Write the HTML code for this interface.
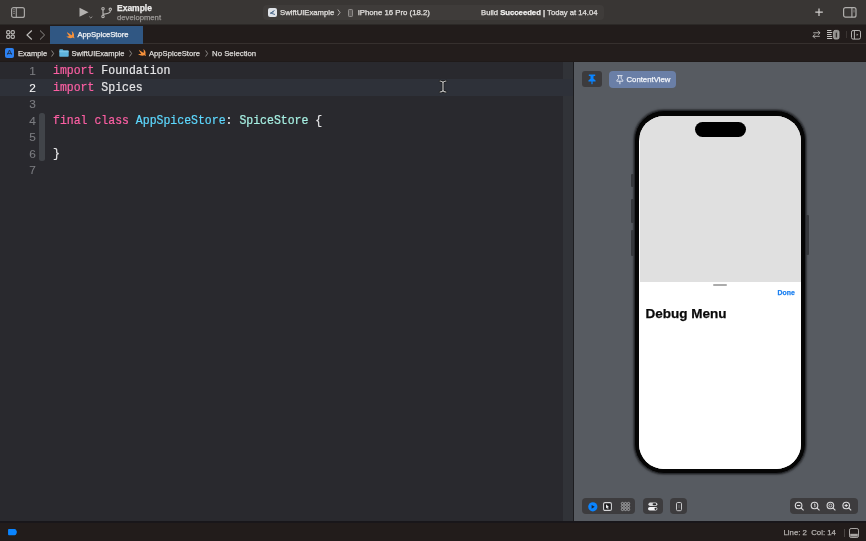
<!DOCTYPE html>
<html><head><meta charset="utf-8">
<style>
*{margin:0;padding:0;box-sizing:border-box}
body{will-change:transform;} html,body{width:866px;height:541px;overflow:hidden;background:#29292e;font-family:"Liberation Sans",sans-serif}
.abs{position:absolute}
svg{position:absolute;overflow:visible}
#title{left:0;top:0;width:866px;height:25px;background:#393634}
#tbot{left:0;top:24px;width:866px;height:1px;background:#2c2927}
#tabbar{left:0;top:25px;width:866px;height:19px;background:#221c1b}
#sep2{left:0;top:43px;width:866px;height:1px;background:#36302e}
#crumb{left:0;top:44px;width:866px;height:18px;background:#231d1c}
#sep3{left:0;top:61px;width:866px;height:1px;background:#1f1a19}
#editor{left:0;top:62px;width:573px;height:459px;background:#29292e}
#hl{left:0;top:79px;width:573px;height:17px;background:#2e3139}
#mini{left:563px;top:62px;width:10px;height:17px;background:#313338}
#mini2{left:563px;top:96px;width:10px;height:425px;background:#313338}
#vsep{left:573px;top:62px;width:1px;height:459px;background:#1c1c1f}
#canvas{left:574px;top:62px;width:292px;height:460px;background:#575b61}
#edbot{left:0;top:521px;width:866px;height:1px;background:#18161a}
#sep4{left:0;top:522px;width:866px;height:1px;background:#19161a}
#status{left:0;top:523px;width:866px;height:18px;background:#221c1b}
.code{font-family:"Liberation Mono",monospace;font-size:11.5px;white-space:pre;color:#e4e4e6;left:53px;height:16.5px;line-height:16.5px;transform-origin:0 60%;transform:translateY(1.3px) scaleY(1.13);-webkit-text-stroke:0.2px currentColor}
.ln{font-family:"Liberation Sans",sans-serif;font-size:11.8px;color:#7b7c80;width:35.8px;text-align:right;left:0;height:16.5px;line-height:16.5px;transform:translateY(1.4px);-webkit-text-stroke:0.1px currentColor}
.kw{color:#fc5fa3}
.ty{color:#5dd8ff}
.ty2{color:#a6efe2}
.t{white-space:nowrap;line-height:1;-webkit-text-stroke:0.25px currentColor}
</style></head>
<body>
<div id="title" class="abs"></div>
<div id="tbot" class="abs"></div>
<div id="tabbar" class="abs"></div>
<div id="sep2" class="abs"></div>
<div id="crumb" class="abs"></div>
<div id="sep3" class="abs"></div>
<div id="editor" class="abs"></div>
<div id="hl" class="abs"></div>
<div id="mini" class="abs"></div>
<div id="mini2" class="abs"></div>
<div id="vsep" class="abs"></div>
<div id="canvas" class="abs"></div>
<div id="edbot" class="abs"></div>
<div id="sep4" class="abs"></div>
<div id="status" class="abs"></div>

<!-- ===== TITLE BAR ===== -->
<svg style="left:11px;top:7px" width="14" height="11" viewBox="0 0 14 11">
  <rect x="0.6" y="0.6" width="12.8" height="9.8" rx="2" fill="none" stroke="#a9a7a5" stroke-width="1.2"/>
  <line x1="5.3" y1="0.6" x2="5.3" y2="10.4" stroke="#a9a7a5" stroke-width="1.1"/>
  <line x1="2" y1="2.8" x2="4" y2="2.8" stroke="#8a8886" stroke-width="0.8"/>
  <line x1="2" y1="4.6" x2="4" y2="4.6" stroke="#8a8886" stroke-width="0.8"/>
  <line x1="2" y1="6.4" x2="4" y2="6.4" stroke="#8a8886" stroke-width="0.8"/>
</svg>
<svg style="left:79px;top:7px" width="15" height="12" viewBox="0 0 15 12">
  <path d="M0.5 0.8 L9.5 5.3 L0.5 9.8 Z" fill="#b3b1af"/>
  <path d="M10.3 9.6 L11.8 11 L13.3 9.6" fill="none" stroke="#a09e9c" stroke-width="0.9"/>
</svg>
<svg style="left:101px;top:7px" width="11" height="11" viewBox="0 0 11 11">
  <g fill="none" stroke="#b5b3b1" stroke-width="1.15">
  <circle cx="2" cy="1.7" r="1.2"/>
  <circle cx="2" cy="9.4" r="1.2"/>
  <circle cx="9.3" cy="2.3" r="1.2"/>
  <path d="M2 2.9 V8.2 M9.3 3.5 V4.2 C9.3 6 7.6 6.6 2 7.4"/>
  </g>
</svg>
<div class="abs t" style="left:117px;top:4px;font-size:8.5px;font-weight:bold;color:#ecebea">Example</div>
<div class="abs t" style="left:117px;top:14px;font-size:7.7px;color:#9d9a98">development</div>

<div class="abs" style="left:263px;top:5px;width:341px;height:15px;background:#3f3c3a;border-radius:4px"></div>
<div class="abs" style="left:268px;top:8px;width:9px;height:9px;background:#dfe3e8;border-radius:2px"></div>
<svg style="left:268px;top:8px" width="9" height="9" viewBox="0 0 9 9">
  <path d="M2 5.5 L6.5 2.5 M2.5 5 L7 6.5 M4 4.2 L5.8 3.8" stroke="#4d6a8a" stroke-width="1" fill="none"/>
</svg>
<div class="abs t" style="left:280px;top:9px;font-size:7.7px;color:#e2e0de">SwiftUIExample</div>
<svg style="left:337px;top:9px" width="4" height="7" viewBox="0 0 4 7"><path d="M0.8 0.5 L3 3.5 L0.8 6.5" fill="none" stroke="#bdbab8" stroke-width="0.9"/></svg>
<div class="abs" style="left:348px;top:9px;width:5px;height:8px;border:1px solid #8e8b89;border-radius:1.2px;background:#5a5755"></div>
<div class="abs t" style="left:358px;top:9px;font-size:7.8px;color:#e2e0de">iPhone 16 Pro (18.2)</div>
<div class="abs t" style="left:481px;top:9px;font-size:7.7px;color:#e2e0de">Build <b style="color:#f2f1f0">Succeeded</b> <span style="font-weight:bold">|</span> Today at 14.04</div>

<svg style="left:815px;top:8px" width="9" height="9" viewBox="0 0 9 9">
  <path d="M4 0.5 V8 M0.3 4.2 H7.8" stroke="#d2d0ce" stroke-width="1.2"/>
</svg>
<svg style="left:843px;top:7px" width="14" height="11" viewBox="0 0 14 11">
  <rect x="0.6" y="0.6" width="12.4" height="9.6" rx="2" fill="none" stroke="#b0aeac" stroke-width="1.2"/>
  <line x1="8.9" y1="0.6" x2="8.9" y2="10.2" stroke="#b0aeac" stroke-width="1.1"/>
  <line x1="11" y1="2.6" x2="11" y2="5.5" stroke="#8a8886" stroke-width="0.9"/>
</svg>

<!-- ===== TAB BAR ===== -->
<svg style="left:6px;top:30px" width="9" height="9" viewBox="0 0 9 9">
  <g fill="none" stroke="#b8b6b4" stroke-width="1.1">
  <rect x="0.6" y="0.6" width="3.3" height="3.3" rx="1.3"/>
  <rect x="5.1" y="0.6" width="3.3" height="3.3" rx="1.3"/>
  <rect x="0.6" y="5.1" width="3.3" height="3.3" rx="1.3"/>
  <rect x="5.1" y="5.1" width="3.3" height="3.3" rx="1.3"/>
  </g>
</svg>
<svg style="left:26px;top:30px" width="7" height="10" viewBox="0 0 7 10"><path d="M5.8 0.5 L1 5 L5.8 9.5" fill="none" stroke="#c0bebc" stroke-width="1.15"/></svg>
<svg style="left:39px;top:30px" width="7" height="10" viewBox="0 0 7 10"><path d="M1 0.5 L5.6 5 L1 9.5" fill="none" stroke="#8f8d8b" stroke-width="1"/></svg>
<div class="abs" style="left:50px;top:26px;width:93px;height:18px;background:#305783"></div>
<svg style="left:66px;top:31px" width="8.5" height="7.5" viewBox="0 0 8.5 7.5">
  <path d="M0 5.3 C2 7.2 5 7.6 6.8 6.6 C7.4 6.9 7.9 7.1 8.4 7.4 C8.4 6.6 8.2 5.9 7.9 5.5 C8.6 3.6 7.6 1.2 5.5 0 C6.3 1.6 6.4 3 5.8 4.2 C4.6 3.4 2.8 2.2 0.9 0.9 C1.3 2.5 2.3 3.9 3.4 5 C2.3 5.5 1.2 5.6 0 5.3 Z" fill="#f5913c"/>
</svg>
<div class="abs t" style="left:77.5px;top:31.3px;font-size:7.65px;color:#f2f3f5">AppSpiceStore</div>

<svg style="left:812px;top:30px" width="9" height="9" viewBox="0 0 9 9">
  <path d="M1.2 2.8 H8 M5.9 0.7 L8 2.8 L5.9 4.9 M7.8 6.3 H1 M3.1 4.2 L1 6.3 L3.1 8.4" fill="none" stroke="#bdbbb9" stroke-width="0.9" stroke-linejoin="round"/>
</svg>
<svg style="left:827px;top:30px" width="13" height="10" viewBox="0 0 13 10">
  <rect x="0" y="0" width="4.4" height="1" fill="#c4c2c0"/>
  <rect x="0" y="2" width="5.2" height="1" fill="#c4c2c0"/>
  <rect x="0" y="4" width="4.4" height="1" fill="#c4c2c0"/>
  <rect x="0" y="6" width="5.2" height="1" fill="#c4c2c0"/>
  <rect x="0" y="8" width="5.2" height="1" fill="#c4c2c0"/>
  <rect x="6.6" y="0.4" width="5.4" height="8.6" rx="1.5" fill="#8e8c8a" stroke="#b8b6b4" stroke-width="0.8"/>
  <rect x="8.8" y="2.5" width="1.1" height="5" rx="0.5" fill="#2a2523"/>
</svg>
<div class="abs" style="left:845.5px;top:31px;width:1px;height:7px;background:#3a3432"></div>
<svg style="left:851px;top:30px" width="10" height="10" viewBox="0 0 10 10">
  <rect x="0.5" y="0.5" width="9" height="8.6" rx="1.6" fill="none" stroke="#b4b2b0" stroke-width="1"/>
  <line x1="3.4" y1="0.5" x2="3.4" y2="9.1" stroke="#b4b2b0" stroke-width="1"/>
  <path d="M5.6 3.8 L7.4 4.8 L5.6 5.8 Z" fill="#b4b2b0"/>
</svg>

<!-- ===== BREADCRUMB ===== -->
<div class="abs" style="left:5px;top:48px;width:9px;height:9.5px;background:#2c80f0;border-radius:2px"></div>
<svg style="left:5px;top:48px" width="9" height="9" viewBox="0 0 9 9">
  <path d="M4.5 2 L2.4 6.6 M4.5 2 L6.6 6.6 M2 5.6 H7" stroke="#1f2f4a" stroke-width="0.9" fill="none"/>
</svg>
<div class="abs t" style="left:18px;top:49.5px;font-size:7.5px;color:#dcdad8">Example</div>
<svg style="left:50.5px;top:50px" width="4" height="7" viewBox="0 0 4 7"><path d="M0.6 0.5 L2.6 3.5 L0.6 6.5" fill="none" stroke="#a4a2a0" stroke-width="0.8"/></svg>
<svg style="left:59px;top:49px" width="10" height="8" viewBox="0 0 10 8">
  <path d="M0.3 1 C0.3 0.5 0.6 0.3 1 0.3 H3.6 L4.5 1.3 H9 C9.4 1.3 9.7 1.6 9.7 2 V7 C9.7 7.4 9.4 7.7 9 7.7 H1 C0.6 7.7 0.3 7.4 0.3 7 Z" fill="#5eb3dd"/>
  <rect x="0.3" y="2.4" width="9.4" height="0.8" fill="#8fd0ef"/>
</svg>
<div class="abs t" style="left:71.5px;top:49.5px;font-size:7.5px;color:#dcdad8">SwiftUIExample</div>
<svg style="left:128.5px;top:50px" width="4" height="7" viewBox="0 0 4 7"><path d="M0.6 0.5 L2.6 3.5 L0.6 6.5" fill="none" stroke="#a4a2a0" stroke-width="0.8"/></svg>
<svg style="left:138px;top:49px" width="8" height="7" viewBox="0 0 8.5 7.5">
  <path d="M0 5.3 C2 7.2 5 7.6 6.8 6.6 C7.4 6.9 7.9 7.1 8.4 7.4 C8.4 6.6 8.2 5.9 7.9 5.5 C8.6 3.6 7.6 1.2 5.5 0 C6.3 1.6 6.4 3 5.8 4.2 C4.6 3.4 2.8 2.2 0.9 0.9 C1.3 2.5 2.3 3.9 3.4 5 C2.3 5.5 1.2 5.6 0 5.3 Z" fill="#f5913c"/>
</svg>
<div class="abs t" style="left:149px;top:49.5px;font-size:7.65px;color:#dcdad8">AppSpiceStore</div>
<svg style="left:205px;top:50px" width="4" height="7" viewBox="0 0 4 7"><path d="M0.6 0.5 L2.6 3.5 L0.6 6.5" fill="none" stroke="#a4a2a0" stroke-width="0.8"/></svg>
<div class="abs t" style="left:212px;top:49.5px;font-size:7.8px;color:#dcdad8">No Selection</div>

<!-- ===== CODE ===== -->
<div class="abs ln" style="top:62px">1</div>
<div class="abs ln" style="top:78.5px;color:#f4f4f5">2</div>
<div class="abs ln" style="top:95px">3</div>
<div class="abs ln" style="top:111.5px">4</div>
<div class="abs ln" style="top:128px">5</div>
<div class="abs ln" style="top:144.5px">6</div>
<div class="abs ln" style="top:161px">7</div>
<div class="abs" style="left:38.5px;top:113px;width:6px;height:48px;background:#414449;border-radius:2.5px"></div>
<div class="abs code" style="top:62px"><span class="kw">import</span> Foundation</div>
<div class="abs code" style="top:78.5px"><span class="kw">import</span> Spices</div>
<div class="abs code" style="top:111.5px"><span class="kw">final</span> <span class="kw">class</span> <span class="ty">AppSpiceStore</span>: <span class="ty2">SpiceStore</span> {</div>
<div class="abs code" style="top:144.5px">}</div>

<!-- I-beam -->
<svg style="left:439px;top:80px" width="8" height="13" viewBox="0 0 8 13">
  <path d="M1 1 C2.5 1 3.3 1.6 4 2.4 C4.7 1.6 5.5 1 7 1 M4 2.4 V10.6 M1 12 C2.5 12 3.3 11.4 4 10.6 C4.7 11.4 5.5 12 7 12" fill="none" stroke="#111" stroke-width="2.4" stroke-linecap="round"/>
  <path d="M1 1 C2.5 1 3.3 1.6 4 2.4 C4.7 1.6 5.5 1 7 1 M4 2.4 V10.6 M1 12 C2.5 12 3.3 11.4 4 10.6 C4.7 11.4 5.5 12 7 12" fill="none" stroke="#d8d8d8" stroke-width="1.1" stroke-linecap="round"/>
</svg>

<!-- ===== CANVAS ===== -->
<div class="abs" style="left:582px;top:71px;width:20px;height:16px;background:#3c3b3d;border-radius:3px"></div>
<svg style="left:588px;top:74px" width="8" height="11" viewBox="0 0 8 11">
  <path d="M0.8 0.4 H7.2 V1.9 H5.6 L5.4 4.6 L7.6 6.6 V7.4 H0.4 V6.6 L2.6 4.6 L2.4 1.9 H0.8 Z" fill="#0a84ff"/>
  <rect x="3.4" y="7" width="1.2" height="3.2" fill="#0a84ff"/>
</svg>
<div class="abs" style="left:609px;top:71px;width:67px;height:17px;background:#6a7fa7;border-radius:4px"></div>
<svg style="left:615.5px;top:74.5px" width="8" height="10" viewBox="0 0 8 10">
  <path d="M1.2 0.6 H6.6 M2.6 0.6 L2.7 3.6 L0.8 5.4 V6.2 H7 V5.4 L5.1 3.6 L5.2 0.6" fill="none" stroke="#e6eaf2" stroke-width="0.9"/>
  <line x1="3.9" y1="6.2" x2="3.9" y2="9.2" stroke="#e6eaf2" stroke-width="1"/>
</svg>
<div class="abs t" style="left:626.5px;top:76px;font-size:7.75px;color:#f3f5fa;-webkit-text-stroke:0.25px #f3f5fa">ContentView</div>

<!-- phone -->
<div class="abs" style="left:630.5px;top:174px;width:3.5px;height:12.5px;background:#36383c;border-radius:1px"></div>
<div class="abs" style="left:630.5px;top:198.5px;width:3.5px;height:24.5px;background:#36383c;border-radius:1px"></div>
<div class="abs" style="left:630.5px;top:230px;width:3.5px;height:25.5px;background:#36383c;border-radius:1px"></div>
<div class="abs" style="left:806px;top:215px;width:3px;height:40px;background:#36383c;border-radius:1px"></div>
<div class="abs" style="left:634px;top:110px;width:172px;height:364px;background:#050505;border-radius:30px;border:1px solid #25272b;box-shadow:0 0 1.5px 0.5px #35373b"></div>
<div class="abs" style="left:639px;top:115.5px;width:162px;height:353px;background:#ffffff;border-radius:25px;overflow:hidden">
  <div class="abs" style="left:1px;top:0;width:161px;height:170px;background:#e0e0e0"></div>
  <div class="abs" style="left:0;top:166px;width:162px;height:190px;background:#ffffff;border-radius:0"></div>
</div>
<div class="abs" style="left:694.5px;top:121.5px;width:51px;height:15px;background:#000;border-radius:7.5px"></div>
<div class="abs" style="left:712.5px;top:283.5px;width:14.5px;height:2px;background:#ababab;border-radius:1px"></div>
<div class="abs t" style="left:777.5px;top:290px;font-size:6.9px;font-weight:bold;color:#1a7ff0">Done</div>
<div class="abs t" style="left:645.5px;top:307px;font-size:13.5px;font-weight:bold;color:#0a0a0a">Debug Menu</div>

<!-- bottom toolbar -->
<div class="abs" style="left:582px;top:498px;width:52.5px;height:16px;background:#3d3c3e;border-radius:4px"></div>
<div class="abs" style="left:643px;top:498px;width:20px;height:16px;background:#3d3c3e;border-radius:4px"></div>
<div class="abs" style="left:670px;top:498px;width:17px;height:16px;background:#3d3c3e;border-radius:4px"></div>
<div class="abs" style="left:790px;top:498px;width:68px;height:16px;background:#3d3c3e;border-radius:4px"></div>
<svg style="left:587.5px;top:501.5px" width="10" height="10" viewBox="0 0 10 10">
  <circle cx="4.8" cy="4.8" r="4.6" fill="#0a84ff"/>
  <path d="M3.6 2.9 L6.7 4.8 L3.6 6.7 Z" fill="#1a2230"/>
</svg>
<svg style="left:603px;top:501.5px" width="9" height="9" viewBox="0 0 9 9">
  <rect x="0.6" y="0.6" width="7.8" height="7.8" rx="1.4" fill="#1c1c1e" stroke="#d6d6d8" stroke-width="1.1"/>
  <path d="M3 2.3 L6.2 5.2 L4.8 5.3 L5.5 6.9 L4.8 7.2 L4.1 5.6 L3 6.6 Z" fill="#ececee"/>
</svg>
<svg style="left:621px;top:502px" width="9" height="9" viewBox="0 0 9 9">
  <g fill="none" stroke="#a9aaad" stroke-width="0.9">
  <circle cx="1.5" cy="1.6" r="1.2"/><circle cx="4.5" cy="1.6" r="1.2"/><circle cx="7.5" cy="1.6" r="1.2"/>
  <circle cx="1.5" cy="4.5" r="1.2"/><circle cx="4.5" cy="4.5" r="1.2"/><circle cx="7.5" cy="4.5" r="1.2"/>
  <circle cx="1.5" cy="7.4" r="1.2"/><circle cx="4.5" cy="7.4" r="1.2"/><circle cx="7.5" cy="7.4" r="1.2"/>
  </g>
</svg>
<svg style="left:648px;top:502px" width="10" height="9" viewBox="0 0 10 9">
  <rect x="0.4" y="0.4" width="9" height="3.6" rx="1.8" fill="#d8d8da"/>
  <rect x="4.6" y="1.2" width="3.6" height="2" rx="1" fill="#2a2a2c"/>
  <rect x="0" y="5" width="9.4" height="3.6" rx="1.8" fill="#f2f2f4"/>
  <circle cx="7.6" cy="6.8" r="1.1" fill="#2a2a2c"/>
</svg>
<svg style="left:675.5px;top:501.5px" width="6" height="9" viewBox="0 0 6 9">
  <rect x="0.5" y="0.5" width="5" height="8.2" rx="1.2" fill="none" stroke="#c8c8ca" stroke-width="1"/>
  <line x1="3" y1="3" x2="3" y2="6" stroke="#6a6a6c" stroke-width="0.8"/>
</svg>
<svg style="left:794px;top:501px" width="60" height="11" viewBox="0 0 60 11">
  <g fill="none" stroke="#dcdcde" stroke-width="1.1">
    <circle cx="4.6" cy="4.5" r="3.3"/><path d="M7 6.9 L9.6 9.4"/><path d="M3 4.5 H6.2"/>
    <circle cx="20.5" cy="4.5" r="3.3"/><path d="M22.9 6.9 L25.5 9.4"/><path d="M20 3.3 L20.9 2.9 V6.2" stroke-width="0.9"/>
    <circle cx="36.4" cy="4.5" r="3.3"/><path d="M38.8 6.9 L41.4 9.4"/><circle cx="36.4" cy="4.5" r="1.5" stroke-width="0.8"/>
    <circle cx="52.2" cy="4.5" r="3.3"/><path d="M54.6 6.9 L57.2 9.4"/><path d="M50.6 4.5 H53.8 M52.2 2.9 V6.1"/>
  </g>
</svg>

<!-- ===== STATUS ===== -->
<svg style="left:7.7px;top:528.9px" width="9.8" height="6.2" viewBox="0 0 11 7">
  <path d="M0 1 C0 0.4 0.4 0 1 0 H7.5 C8.2 0 8.6 0.3 9 0.8 L9.8 2.5 C10 3 10 4 9.8 4.5 L9 6.2 C8.6 6.7 8.2 7 7.5 7 H1 C0.4 7 0 6.6 0 6 Z" fill="#0a84ff"/>
</svg>
<div class="abs t" style="left:783.5px;top:528.6px;font-size:7.8px;color:#b3b0ae;letter-spacing:0px">Line: 2&nbsp; Col: 14</div>
<div class="abs" style="left:843.5px;top:529px;width:1px;height:8px;background:#4a4543"></div>
<svg style="left:849px;top:527.5px" width="10" height="10" viewBox="0 0 10 10">
  <rect x="0.5" y="0.5" width="9" height="9" rx="1.6" fill="none" stroke="#a9a6a4" stroke-width="1"/>
  <rect x="1.2" y="5.8" width="7.6" height="2.8" fill="#a9a6a4"/>
</svg>

</body></html>
